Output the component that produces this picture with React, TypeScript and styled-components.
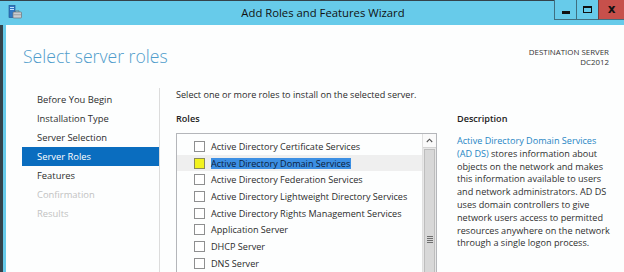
import React from "react"
import styled, { createGlobalStyle } from "styled-components"

const GlobalStyle = createGlobalStyle`
  html, body {
    margin: 0;
    padding: 0;
    width: 624px;
    height: 272px;
    overflow: hidden;
    background: #34434b;
    font-family: "Open Sans", "Noto Sans", sans-serif;
  }
  * { box-sizing: border-box; }
`

const navItems = [
  { label: "Before You Begin", state: "normal" },
  { label: "Installation Type", state: "normal" },
  { label: "Server Selection", state: "normal" },
  { label: "Server Roles", state: "active" },
  { label: "Features", state: "normal" },
  { label: "Confirmation", state: "disabled" },
  { label: "Results", state: "disabled" },
] as const

const roles = [
  "Active Directory Certificate Services",
  "Active Directory Domain Services",
  "Active Directory Federation Services",
  "Active Directory Lightweight Directory Services",
  "Active Directory Rights Management Services",
  "Application Server",
  "DHCP Server",
  "DNS Server",
]

const descriptionLines = [
  "(AD DS) stores information about",
  "objects on the network and makes",
  "this information available to users",
  "and network administrators. AD DS",
  "uses domain controllers to give",
  "network users access to permitted",
  "resources anywhere on the network",
  "through a single logon process.",
]

const ServerIcon = () => (
  <svg width="14" height="14" viewBox="0 0 14 14">
    <rect x="1" y="0.5" width="6" height="12" fill="#2f78c4" stroke="#1d4f8a" strokeWidth="0.6" />
    <rect x="2" y="2" width="4" height="1" fill="#bfe0ff" />
    <rect x="2" y="4" width="4" height="1" fill="#bfe0ff" />
    <rect x="5" y="7" width="8.5" height="6" rx="0.8" fill="#c9ccd0" stroke="#6d7378" strokeWidth="0.7" />
    <path d="M7.5 7 V5.8 H11 V7" fill="none" stroke="#6d7378" strokeWidth="0.7" />
    <rect x="5.4" y="9.4" width="7.7" height="0.8" fill="#8e9499" />
  </svg>
)

export default function App() {
  return (
    <>
      <GlobalStyle />
      <Window>
        <TitleBar>
          <IconSlot>
            <ServerIcon />
          </IconSlot>
          <Title>Add Roles and Features Wizard</Title>
          <Controls>
            <CtrlButton>
              <MinGlyph />
            </CtrlButton>
            <CtrlButton>
              <MaxGlyph />
            </CtrlButton>
            <CtrlButton $close>
              <CloseGlyph>x</CloseGlyph>
            </CtrlButton>
          </Controls>
        </TitleBar>
        <Frame>
          <Content>
            <Header>
              <Heading>Select server roles</Heading>
              <Destination>
                <div>DESTINATION SERVER</div>
                <div>DC2012</div>
              </Destination>
            </Header>
            <Main>
              <Nav>
                {navItems.map((item) => (
                  <NavItem key={item.label} $state={item.state}>
                    {item.label}
                  </NavItem>
                ))}
              </Nav>
              <Pane>
                <Intro>Select one or more roles to install on the selected server.</Intro>
                <Columns>
                  <RolesColumn>
                    <SectionLabel>Roles</SectionLabel>
                    <ListBox>
                      <Rows>
                        {roles.map((role, i) => (
                          <Row key={role} $focused={i === 1}>
                            <Check $highlight={i === 1} />
                            {i === 1 ? <Selected>{role}</Selected> : <span>{role}</span>}
                          </Row>
                        ))}
                      </Rows>
                      <ScrollBar>
                        <ArrowButton>
                          <svg width="7" height="5" viewBox="0 0 7 5">
                            <path d="M0.8 4 L3.5 1.2 L6.2 4" fill="none" stroke="#555" strokeWidth="1.1" />
                          </svg>
                        </ArrowButton>
                        <Thumb>
                          <Grip />
                        </Thumb>
                      </ScrollBar>
                    </ListBox>
                  </RolesColumn>
                  <DescColumn>
                    <SectionLabel>Description</SectionLabel>
                    <Para>
                      <Link>Active Directory Domain Services</Link>
                      {descriptionLines.map((line, i) => (
                        <Line key={i}>
                          {i === 0 ? (
                            <>
                              <Link>(AD DS)</Link>
                              {line.slice(7)}
                            </>
                          ) : (
                            line
                          )}
                        </Line>
                      ))}
                    </Para>
                  </DescColumn>
                </Columns>
              </Pane>
            </Main>
          </Content>
        </Frame>
      </Window>
    </>
  )
}

const Window = styled.div`
  display: flex;
  flex-direction: column;
  width: 624px;
  height: 272px;
  padding-top: 1px;
`

const TitleBar = styled.div`
  position: relative;
  display: flex;
  align-items: center;
  height: 24px;
  background: #67cbea;
  flex-shrink: 0;
`

const IconSlot = styled.div`
  display: flex;
  padding: 0 0 2px 8px;
`

const Title = styled.div`
  flex: 1;
  text-align: center;
  margin-right: 0;
  font-size: 11.3px;
  color: #111;
  padding-bottom: 1px;
`

const Controls = styled.div`
  position: absolute;
  top: -1px;
  right: 0;
  display: flex;
  height: 20px;
`

const CtrlButton = styled.div<{ $close?: boolean }>`
  display: flex;
  align-items: center;
  justify-content: center;
  width: ${(p) => (p.$close ? "26px" : "22px")};
  height: 20px;
  background: ${(p) => (p.$close ? "#c7504b" : "#67cbea")};
  border-left: 1px solid ${(p) => (p.$close ? "#7a3b38" : "#3f6f80")};
  border-bottom: 1px solid #3f6f80;
`

const MinGlyph = styled.div`
  width: 8px;
  height: 3px;
  background: #111;
  margin-top: 6px;
`

const MaxGlyph = styled.div`
  width: 9px;
  height: 7px;
  border: 1px solid #111;
  border-top-width: 2px;
`

const CloseGlyph = styled.span`
  font-family: "DejaVu Sans", sans-serif;
  font-weight: bold;
  font-size: 12px;
  color: #111;
  line-height: 1;
  margin-top: -2px;
`

const Frame = styled.div`
  flex: 1;
  display: flex;
  border-left: 3px solid #34434b;
  padding-left: 3px;
  background: #67cbea;
  min-height: 0;
`

const Content = styled.div`
  flex: 1;
  display: flex;
  flex-direction: column;
  background: #fdfefe;
  color: #2b2b2b;
  font-size: 9.1px;
  min-height: 0;
`

const Header = styled.div`
  display: flex;
  justify-content: space-between;
  align-items: flex-start;
  padding: 18px 15px 0 17px;
  height: 63px;
  flex-shrink: 0;
`

const Heading = styled.h1`
  margin: 0;
  font-size: 17.6px;
  font-weight: 300;
  color: #4f9ccb;
  line-height: 26px;
`

const Destination = styled.div`
  text-align: right;
  font-size: 7.9px;
  line-height: 10px;
  color: #333;
  padding-top: 4px;
`

const Main = styled.div`
  flex: 1;
  display: flex;
  min-height: 0;
`

const Nav = styled.div`
  width: 154px;
  padding: 2px 0 0 16px;
  border-right: 1px solid #dcdcdc;
  display: flex;
  flex-direction: column;
`

const NavItem = styled.div<{ $state: "normal" | "active" | "disabled" }>`
  height: 19px;
  line-height: 19px;
  padding-left: 15px;
  font-size: 9.4px;
  background: ${(p) => (p.$state === "active" ? "#0a6dbf" : "transparent")};
  color: ${(p) => (p.$state === "active" ? "#fff" : p.$state === "disabled" ? "#c2c2c2" : "#2e2e2e")};
`

const Pane = styled.div`
  flex: 1;
  padding: 0 0 0 16px;
  display: flex;
  flex-direction: column;
  min-height: 0;
`

const Intro = styled.div`
  line-height: 14px;
`

const Columns = styled.div`
  flex: 1;
  display: flex;
  gap: 20px;
  margin-top: 10px;
  min-height: 0;
`

const RolesColumn = styled.div`
  width: 261px;
  display: flex;
  flex-direction: column;
  min-height: 0;
`

const DescColumn = styled.div`
  flex: 1;
  display: flex;
  flex-direction: column;
`

const SectionLabel = styled.div`
  font-weight: 600;
  line-height: 14px;
  color: #222;
`

const ListBox = styled.div`
  flex: 1;
  display: flex;
  margin-top: 7px;
  min-height: 0;
  overflow: hidden;
  border: 1px solid #b4b6ba;
  border-bottom: none;
`

const Rows = styled.div`
  flex: 1;
  padding-top: 4px;
`

const Row = styled.div<{ $focused: boolean }>`
  display: flex;
  align-items: center;
  height: 16.7px;
  padding-left: 17px;
  gap: 6px;
  white-space: nowrap;
  background: ${(p) => (p.$focused ? "#efefef" : "transparent")};
`

const Check = styled.div<{ $highlight: boolean }>`
  width: 11px;
  height: 11px;
  flex-shrink: 0;
  border: 1px solid ${(p) => (p.$highlight ? "#8a8a5a" : "#8e8f90")};
  background: ${(p) => (p.$highlight ? "#f2f21e" : "#fff")};
`

const Selected = styled.span`
  background: #3c8fe3;
  color: #0c1d3a;
  line-height: 11px;
  padding: 0 1px 0 0;
`

const ScrollBar = styled.div`
  width: 14px;
  display: flex;
  flex-direction: column;
  background: #e8e8e8;
  border-left: 1px solid #e0e0e0;
`

const ArrowButton = styled.div`
  height: 14px;
  flex-shrink: 0;
  display: flex;
  align-items: center;
  justify-content: center;
  background: #fafafa;
  border-bottom: 1px solid #d4d4d4;
`

const Thumb = styled.div`
  margin: 1px 1px 0;
  height: 180px;
  flex-shrink: 0;
  background: #d8d8d8;
  border: 1px solid #bdbdbd;
  display: flex;
  align-items: center;
  justify-content: center;
`

const Grip = styled.div`
  width: 6px;
  height: 7px;
  background: repeating-linear-gradient(#6f6f6f 0 1px, transparent 1px 2px);
`

const Para = styled.div`
  margin-top: 9px;
  line-height: 12.8px;
  color: #2f2f2f;
  white-space: nowrap;
`

const Link = styled.span`
  color: #2585c4;
`

const Line = styled.div``
